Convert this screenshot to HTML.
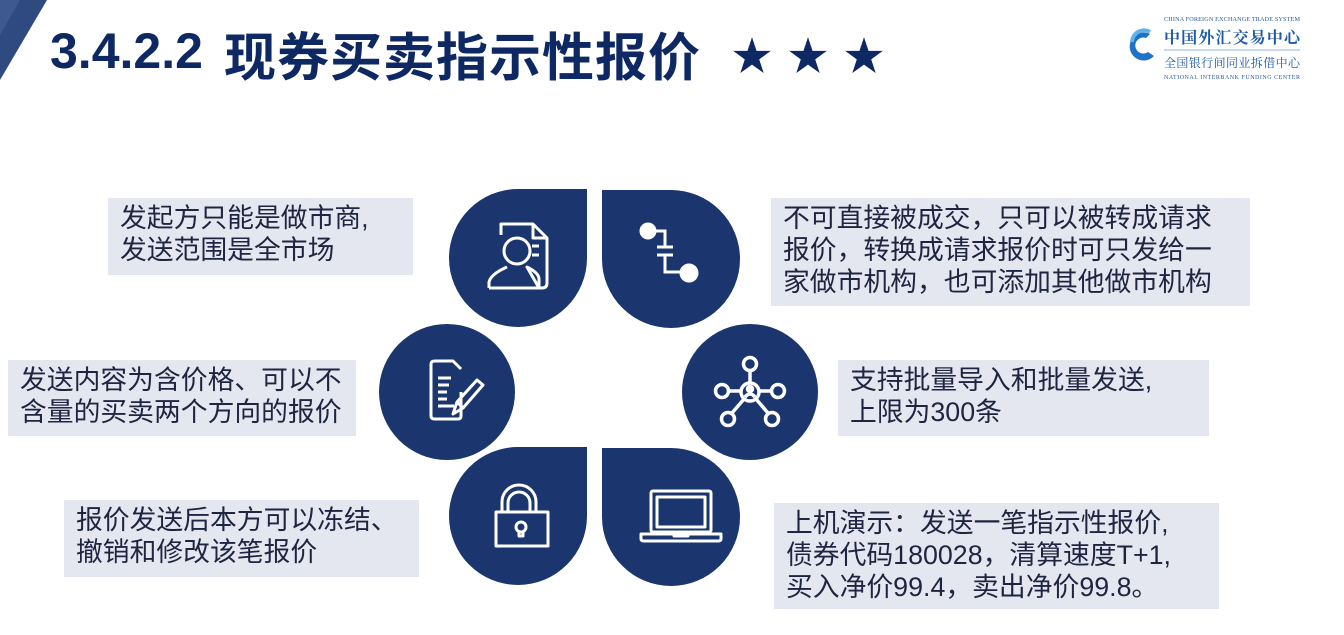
<!DOCTYPE html>
<html><head><meta charset="utf-8"><style>
body{margin:0;width:1344px;height:635px;background:#fff;position:relative;overflow:hidden;font-family:"Liberation Sans","Noto Sans CJK SC",sans-serif}
.t{position:absolute;top:20px;font-size:46px;font-weight:bold;color:#0d2862;white-space:nowrap}
.b{position:absolute;background:#e4e7ef;color:#1f2540;font-size:26.8px;line-height:32px;padding:4px 12px;box-sizing:border-box;white-space:nowrap}
.d{position:absolute;width:138px;height:138px;background:#1b356e;border-radius:50%}
svg.i{position:absolute;left:0;top:0;width:138px;height:138px}
</style></head><body>
<svg style="position:absolute;left:0;top:0" width="60" height="90"><polygon points="0,0 47,0 0,80" fill="#2f4a80"/><polygon points="0,0 20,0 0,35" fill="#3e5990"/></svg>
<div class="t" style="left:50px;font-size:50px;top:22px">3.4.2.2</div>
<div class="t" style="left:224px;font-size:52px;top:16px;letter-spacing:1px">现券买卖指示性报价</div>
<div class="t" style="left:732px;font-size:40px;top:24px;letter-spacing:16px">★★★</div>

<svg style="position:absolute;left:1120px;top:12px" width="185" height="70">
<text x="44" y="9" font-size="6.2" fill="#2a5a9a" font-family="Liberation Serif" textLength="136">CHINA FOREIGN EXCHANGE TRADE SYSTEM</text>
<text x="44" y="31" font-size="16" fill="#1d5aa8" font-family="Noto Serif CJK SC,serif" font-weight="bold" textLength="136">中国外汇交易中心</text>
<line x1="44" y1="38" x2="180" y2="38" stroke="#8fb4dd" stroke-width="1"/>
<text x="44" y="55" font-size="12" fill="#1d5aa8" font-family="Noto Serif CJK SC,serif" textLength="136">全国银行间同业拆借中心</text>
<text x="44" y="67" font-size="6" fill="#2a5a9a" font-family="Liberation Serif" textLength="136">NATIONAL INTERBANK FUNDING CENTER</text>
<path d="M30,22 A14,14 0 1 0 34,44 L28,40 A8,8 0 1 1 26,26 Z" fill="#1e73c8"/>
<path d="M12,30 A12,12 0 0 1 30,20" stroke="#5fb3e8" stroke-width="4" fill="none"/>
</svg>

<div class="b" style="left:108px;top:198px;width:305px;height:77px">发起方只能是做市商,<br>发送范围是全市场</div>
<div class="b" style="left:771px;top:198px;width:479px;height:108px">不可直接被成交，只可以被转成请求<br>报价，转换成请求报价时可只发给一<br>家做市机构，也可添加其他做市机构</div>
<div class="b" style="left:8px;top:360px;width:348px;height:76px">发送内容为含价格、可以不<br>含量的买卖两个方向的报价</div>
<div class="b" style="left:838px;top:360px;width:371px;height:76px">支持批量导入和批量发送,<br>上限为300条</div>
<div class="b" style="left:64px;top:500px;width:355px;height:77px">报价发送后本方可以冻结、<br>撤销和修改该笔报价</div>
<div class="b" style="left:774px;top:503px;width:445px;height:106px">上机演示：发送一笔指示性报价,<br>债券代码180028，清算速度T+1,<br>买入净价99.4，卖出净价99.8。</div>

<div class="d" style="left:449px;top:189px;border-top-right-radius:0">
<svg class="i" fill="none" stroke="#fff" stroke-width="3" stroke-linejoin="round">
<path d="M52,46 V35 H84 L98,49 V94 Q98,99 93,99 H83"/><path d="M84,35 V49 H98"/>
<circle cx="68" cy="62" r="13"/><path d="M40,99 V93 Q42,85 58,78 M78,78 Q90,84 90,90 V99 Z M40,99 H90"/>
<path d="M83,57 H90 M83,66 H90"/></svg></div>

<div class="d" style="left:602px;top:190px;border-top-left-radius:0">
<svg class="i" stroke="#fff" stroke-width="3" fill="none">
<circle cx="46" cy="41" r="7" fill="#fff"/><path d="M46,41 H63 V57 M55,57 H71 M55,65 H71 M63,65 V82 H86"/><circle cx="87" cy="83" r="8" fill="#fff"/></svg></div>

<div class="d" style="left:379px;top:324px;width:136px;height:136px">
<svg class="i" fill="none" stroke="#fff" stroke-width="3" stroke-linejoin="round">
<path d="M82,68 V92 Q82,95 79,95 H56 Q52,95 52,92 V40 Q52,37 56,37 H74 L82,45"/>
<path d="M59,54 H72 M59,61 H70 M59,68 H68 M59,75 H68 M59,82 H75"/>
<path d="M74,90 L78,78 L98,56 L104,61 L84,84 Z M78,78 L84,84"/></svg></div>

<div class="d" style="left:682px;top:324px;width:136px;height:136px">
<svg class="i" fill="none" stroke="#fff" stroke-width="3.5">
<circle cx="68" cy="40" r="6.5"/><circle cx="40" cy="67" r="6.5"/><circle cx="96" cy="67" r="6.5"/><circle cx="46" cy="95" r="6.5"/><circle cx="90" cy="95" r="6.5"/>
<circle cx="68" cy="68" r="9"/><path d="M68,47 V59 M47,67 L59,67 M89,67 L77,67 M50,89 L62,75 M86,89 L74,75"/>
<circle cx="68" cy="65" r="2.5" fill="#fff"/><path d="M63,73 Q68,67 73,73"/></svg></div>

<div class="d" style="left:449px;top:447px;border-top-right-radius:0">
<svg class="i" fill="none" stroke="#fff" stroke-width="3" stroke-linejoin="round">
<path d="M53,65 V55 A17,17 0 0 1 87,55 V65 M59,65 V56 A11,11 0 0 1 81,56 V65"/>
<path d="M47,65 H99 V99 H47 Z"/><circle cx="72" cy="80" r="5"/><path d="M70,84 V89 H74 V84"/></svg></div>

<div class="d" style="left:602px;top:448px;border-top-left-radius:0">
<svg class="i" fill="none" stroke="#fff" stroke-width="3" stroke-linejoin="round">
<rect x="49" y="43" width="60" height="41" rx="2"/><rect x="55" y="49" width="48" height="30"/>
<path d="M39,86 H119 V91 Q119,93 116,93 H42 Q39,93 39,91 Z M72,86 V88 H86 V86"/></svg></div>
</body></html>
